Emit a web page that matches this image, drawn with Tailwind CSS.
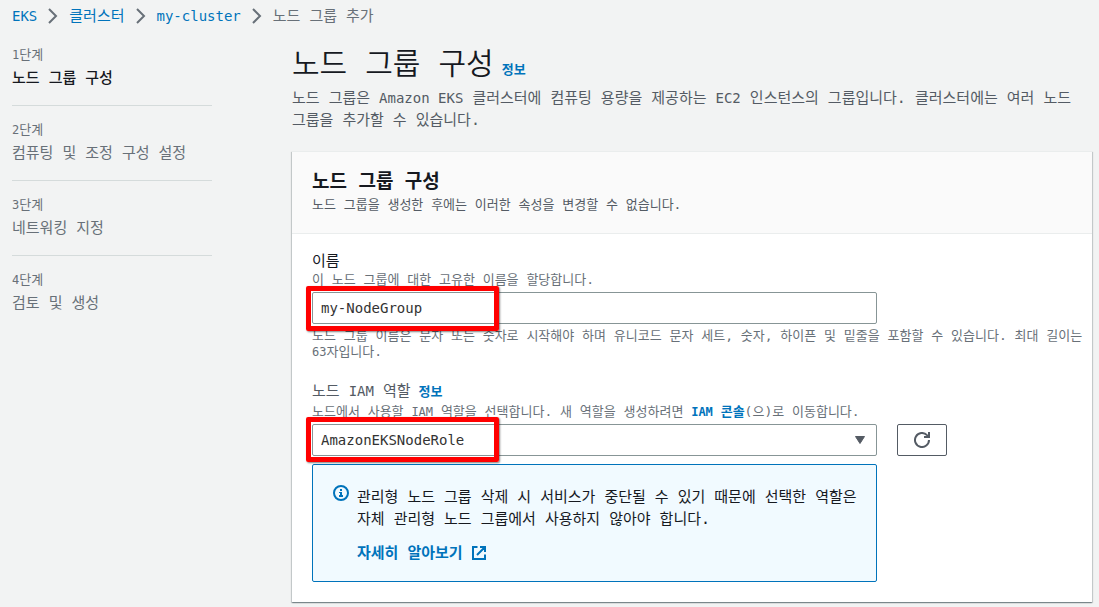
<!DOCTYPE html>
<html lang="ko">

<head>
    <meta charset="UTF-8">
    <meta name="viewport" content="width=device-width, initial-scale=1.0">
    <title>노드 그룹 추가</title>

    <!-- Tailwind CSS -->
    <script src="https://cdn.jsdelivr.net/npm/@tailwindcss/browser@4"></script>
</head>

<body class="bg-[#f2f3f3] min-h-screen text-[15px] leading-[22px] break-keep text-[#16191f] font-['DejaVu_Sans_Mono','Noto_Sans_CJK_KR',monospace]">

    <!-- Breadcrumb -->
    <nav class="px-3 pt-[5px]" aria-label="Breadcrumb">
        <ol class="flex items-center gap-2 text-[#687078]">
            <li><a class="text-sm text-[#0073bb]" href="#">EKS</a></li>
            <li><svg class="w-4 h-4" viewBox="0 0 16 16" fill="none" stroke="currentColor" stroke-width="2"><path d="M4 1l7 7-7 7" /></svg></li>
            <li><a class="text-[#0073bb]" href="#">클러스터</a></li>
            <li><svg class="w-4 h-4" viewBox="0 0 16 16" fill="none" stroke="currentColor" stroke-width="2"><path d="M4 1l7 7-7 7" /></svg></li>
            <li><a class="text-sm text-[#0073bb]" href="#">my-cluster</a></li>
            <li><svg class="w-4 h-4" viewBox="0 0 16 16" fill="none" stroke="currentColor" stroke-width="2"><path d="M4 1l7 7-7 7" /></svg></li>
            <li>노드 그룹 추가</li>
        </ol>
    </nav>

    <div class="flex gap-20 pl-3 pr-[7px] pt-4">

        <!-- Steps -->
        <ol class="w-[200px] shrink-0 text-[#687078]">
            <li class="pt-0.5 pb-4 mb-3 border-b border-[#d5dbdb]">
                <div class="text-[13px] leading-5"><span class="text-xs">1</span>단계</div>
                <div class="pt-0.5 font-medium text-[#16191f]">노드 그룹 구성</div>
            </li>
            <li class="pt-0.5 pb-4 mb-3 border-b border-[#d5dbdb]">
                <div class="text-[13px] leading-5"><span class="text-xs">2</span>단계</div>
                <div class="pt-0.5">컴퓨팅 및 조정 구성 설정</div>
            </li>
            <li class="pt-0.5 pb-4 mb-3 border-b border-[#d5dbdb]">
                <div class="text-[13px] leading-5"><span class="text-xs">3</span>단계</div>
                <div class="pt-0.5">네트워킹 지정</div>
            </li>
            <li class="pt-0.5">
                <div class="text-[13px] leading-5"><span class="text-xs">4</span>단계</div>
                <div class="pt-0.5">검토 및 생성</div>
            </li>
        </ol>

        <main class="flex-1 min-w-0">
            <div class="flex items-baseline gap-2 pt-px">
                <h1 class="text-[30px] leading-10 font-[350]">노드 그룹 구성</h1>
                <a class="text-[13px] font-bold text-[#0073bb]" href="#">정보</a>
            </div>
            <p class="pt-[3px] text-[#545b64]">노드 그룹은 <span class="text-sm">Amazon EKS</span> 클러스터에 컴퓨팅 용량을 제공하는 <span class="text-sm">EC2</span> 인스턴스의 그룹입니다. 클러스터에는 여러 노드 그룹을 추가할 수 있습니다.</p>

            <section class="mt-5 bg-white border-t border-[#eaeded] shadow-[0_1px_1px_0_rgba(0,28,36,0.3),1px_1px_1px_0_rgba(0,28,36,0.15),-1px_1px_1px_0_rgba(0,28,36,0.15)]">
                <header class="px-5 pt-[15px] pb-[19px] bg-[#fafafa] border-b border-[#eaeded]">
                    <h2 class="text-[19px] leading-7 font-bold">노드 그룹 구성</h2>
                    <p class="pt-px text-[13px] leading-[18px] text-[#545b64]">노드 그룹을 생성한 후에는 이러한 속성을 변경할 수 없습니다.</p>
                </header>

                <form class="px-5 pt-4 pb-5">
                    <label class="block" for="name">이름</label>
                    <p class="text-[13px] leading-4 text-[#687078]">이 노드 그룹에 대한 고유한 이름을 할당합니다.</p>
                    <div class="-mr-5 pt-1">
                        <div class="w-3/4 pr-5">
                            <div class="relative">
                                <input id="name" type="text" value="my-NodeGroup" class="block w-full h-8 px-2 text-sm bg-white border border-[#879596] rounded-xs text-[#333]">
                                <div class="absolute -left-1.5 -top-1.5 w-[193px] h-[45px] border-5 border-[#ff0000] rounded-xs shadow-[1px_1px_2px_rgba(0,0,0,0.5)] pointer-events-none"></div>
                            </div>
                        </div>
                        <p class="pt-1 pr-2 text-[13px] leading-4 text-[#687078]">노드 그룹 이름은 문자 또는 숫자로 시작해야 하며 유니코드 문자 세트, 숫자, 하이픈 및 밑줄을 포함할 수 있습니다. 최대 길이는 <span class="text-xs">63</span>자입니다.</p>
                    </div>

                    <div class="flex items-baseline gap-2 pt-5">
                        <label class="text-[#545b64]" for="role">노드 <span class="text-sm">IAM</span> 역할</label>
                        <a class="text-[13px] font-bold text-[#0073bb]" href="#">정보</a>
                    </div>
                    <p class="pt-px text-[13px] leading-4 text-[#687078]">노드에서 사용할 <span class="text-xs">IAM</span> 역할을 선택합니다. 새 역할을 생성하려면 <a class="font-bold text-[#0073bb]" href="#"><span class="text-xs">IAM</span> 콘솔</a>(으)로 이동합니다.</p>
                    <div class="-mr-5 pt-1 flex">
                        <div class="w-3/4 pr-5">
                            <div class="relative">
                                <select id="role" class="block appearance-none w-full h-8 px-2 text-sm bg-white border border-[#879596] rounded-xs text-[#333]">
                                    <option>AmazonEKSNodeRole</option>
                                </select>
                                <svg class="absolute right-3 top-3 w-[10px] h-2 text-[#545b64] pointer-events-none" viewBox="0 0 10 8" fill="currentColor" stroke="currentColor" stroke-linejoin="round"><path d="M.5.5h9L5 7.5z" /></svg>
                                <div class="absolute -left-1.5 -top-[7px] w-[193px] h-[45px] border-5 border-[#ff0000] rounded-xs shadow-[1px_1px_2px_rgba(0,0,0,0.5)] pointer-events-none"></div>
                            </div>

                            <!-- Info alert -->
                            <div class="mt-2 pl-5 pr-3 pt-5 pb-[17px] flex gap-2 bg-[#f1faff] border border-[#0073bb] rounded-xs">
                                <svg class="w-4 h-4 shrink-0 text-[#0073bb]" viewBox="0 0 16 16" fill="none" stroke="currentColor" stroke-width="2"><circle cx="8" cy="8" r="7" /><path d="M7 4h2v2H7zM6 7h3v3h1v2H6v-2h1V8H6z" fill="currentColor" stroke="none" /></svg>
                                <div class="pt-px">
                                    <p>관리형 노드 그룹 삭제 시 서비스가 중단될 수 있기 때문에 선택한 역할은 자체 관리형 노드 그룹에서 사용하지 않아야 합니다.</p>
                                    <a class="inline-flex items-center gap-2 mt-3 font-bold text-[#0073bb]" href="#">
                                        자세히 알아보기
                                        <svg class="w-4 h-4" viewBox="0 0 16 16" fill="none" stroke="currentColor" stroke-width="2"><path d="M6.500 2H2v12h12V9.500M9 2h5v5M14 2L6 10" /></svg>
                                    </a>
                                </div>
                            </div>
                        </div>
                        <button type="button" aria-label="새로 고침" class="w-[50px] h-8 flex items-center justify-center bg-white border border-[#545b64] rounded-xs text-[#545b64]">
                            <svg class="w-4 h-4" viewBox="0 0 16 16" fill="none" stroke="currentColor" stroke-width="2"><path d="M15 8a7 7 0 1 1-2-4.900L15 5M15 0v5h-5" /></svg>
                        </button>
                    </div>
                </form>
            </section>
        </main>
    </div>

</body>

</html>
